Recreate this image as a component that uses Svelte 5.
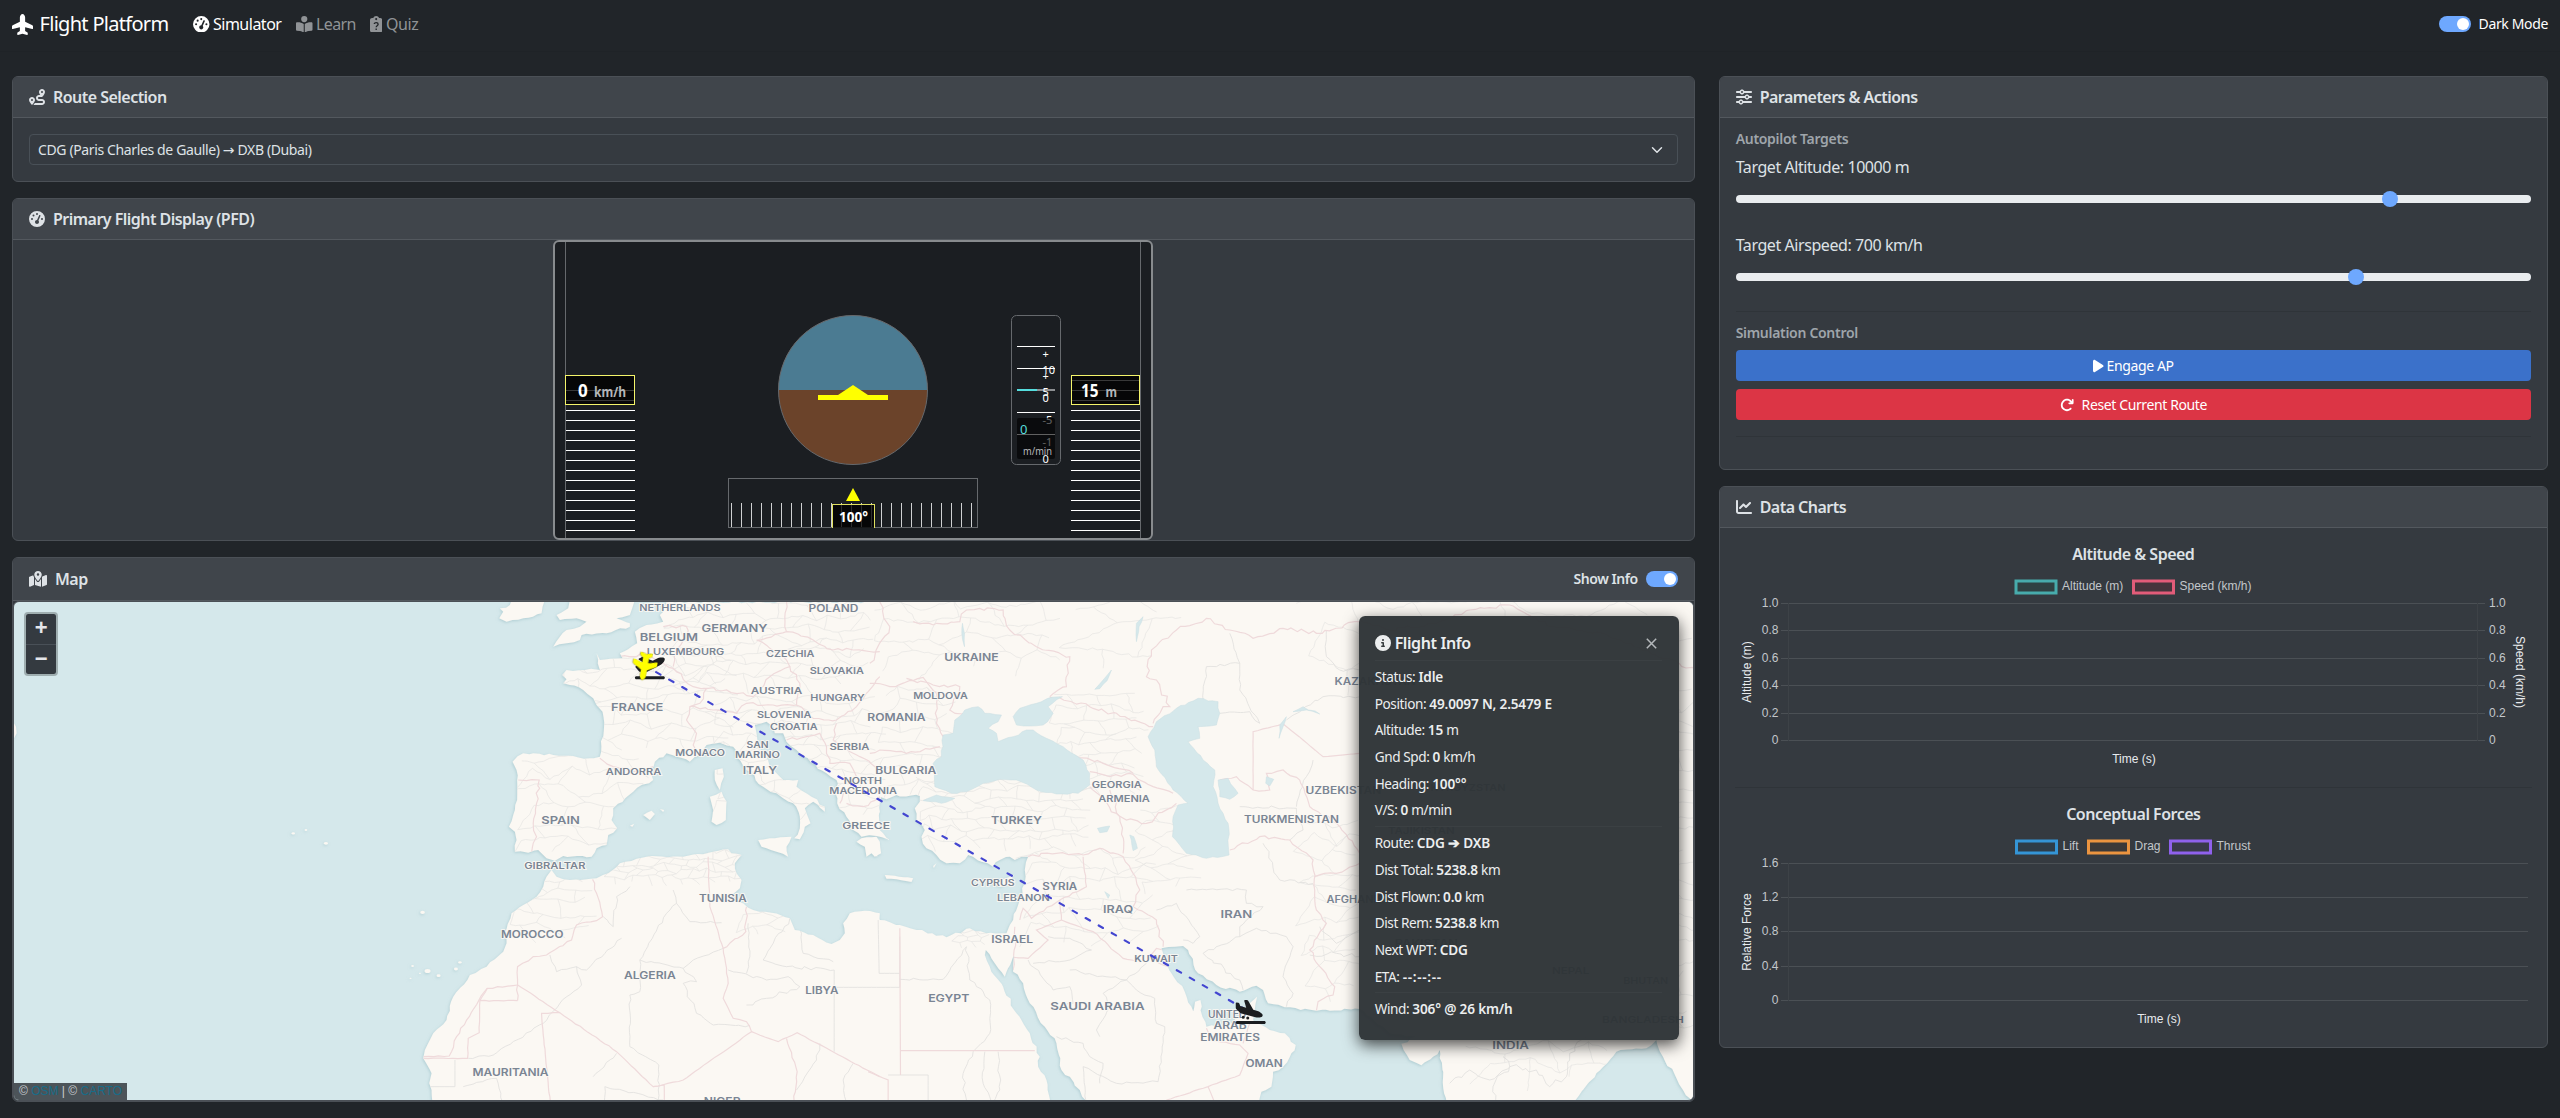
<script>
  const icons = {
    plane: [576, 'M482.3 192c34.2 0 93.7 29 93.7 64c0 36-59.5 64-93.7 64l-116.6 0L265.2 495.9c-5.7 10-16.3 16.1-27.8 16.1l-56.2 0c-10.6 0-18.3-10.2-15.4-20.4l49-171.6L112 320 68.8 377.6c-3 4-7.8 6.4-12.8 6.4l-42 0c-7.8 0-14-6.3-14-14c0-1.3 .2-2.6 .5-3.9L32 256 .5 145.9c-.4-1.3-.5-2.6-.5-3.9c0-7.8 6.3-14 14-14l42 0c5 0 9.8 2.4 12.8 6.4L112 192l102.9 0-49-171.6C162.9 10.2 170.6 0 181.2 0l56.2 0c11.5 0 22.1 6.2 27.8 16.1L365.7 192l116.6 0z'],
    gauge: [512, 'M0 256a256 256 0 1 1 512 0A256 256 0 1 1 0 256zM288 96a32 32 0 1 0 -64 0 32 32 0 1 0 64 0zM256 416c35.3 0 64-28.7 64-64c0-17.4-6.9-33.1-18.1-44.6L366 161.7c5.3-12.1-.2-26.3-12.3-31.6s-26.3 .2-31.6 12.3L257.9 288c-.6 0-1.3 0-1.9 0c-35.3 0-64 28.7-64 64s28.7 64 64 64zM176 144a32 32 0 1 0 -64 0 32 32 0 1 0 64 0zM96 288a32 32 0 1 0 0-64 32 32 0 1 0 0 64zm352-32a32 32 0 1 0 -64 0 32 32 0 1 0 64 0z'],
    reader: [512, 'M160 96a96 96 0 1 1 192 0A96 96 0 1 1 160 96zm80 152l0 264-48.4-24.2c-20.9-10.4-43.5-17-66.8-19.3l-96-9.6C12.5 457.2 0 443.5 0 427L0 224c0-17.7 14.3-32 32-32l30.3 0c63.6 0 125.6 19.6 177.7 56zm32 264l0-264c52.1-36.4 114.1-56 177.7-56l30.3 0c17.7 0 32 14.3 32 32l0 203c0 16.4-12.5 30.2-28.8 31.8l-96 9.6c-23.2 2.3-45.9 8.9-66.8 19.3L272 512z'],
    route: [512, 'M512 96c0 50.2-59.1 125.1-84.6 155c-3.8 4.4-9.4 6.1-14.5 5L320 256c-17.7 0-32 14.3-32 32s14.3 32 32 32l96 0c53 0 96 43 96 96s-43 96-96 96l-276.4 0c8.7-9.9 19.3-22.6 30-36.8c6.3-8.4 12.8-17.6 19-27.2L416 448c17.7 0 32-14.3 32-32s-14.3-32-32-32l-96 0c-53 0-96-43-96-96s43-96 96-96l39.8 0c-21-31.5-39.8-67.7-39.8-96c0-53 43-96 96-96s96 43 96 96zM117.1 489.1c-3.8 4.3-7.2 8.1-10.1 11.3l-1.8 2-.2-.2c-6 4.6-14.6 4-20-1.8C59.8 473 0 402.5 0 352c0-53 43-96 96-96s96 43 96 96c0 30-21.1 67-43.5 97.9c-10.7 14.7-21.7 28-30.8 38.5l-.6 .7zM128 352a32 32 0 1 0 -64 0 32 32 0 1 0 64 0zM416 128a32 32 0 1 0 0-64 32 32 0 1 0 0 64z'],
    map: [576, 'M408 120c0 54.6-73.1 151.9-105.2 192c-7.7 9.6-22 9.6-29.6 0C241.1 271.9 168 174.6 168 120C168 53.7 221.7 0 288 0s120 53.7 120 120zm8 80.4c3.5-6.9 6.7-13.8 9.6-20.6c.5-1.2 1-2.5 1.5-3.7l116-46.4C558.9 123.4 576 135 576 152l0 270.8c0 9.8-6 18.6-15.1 22.3L416 503l0-302.6zM137.6 138.3c2.4 14.1 7.2 28.3 12.8 41.5c2.9 6.8 6.1 13.7 9.6 20.6l0 251.4L32.9 502.7C17.1 509 0 497.4 0 480.4L0 209.6c0-9.8 6-18.6 15.1-22.3l122.6-49zM327.8 332c13.9-17.4 35.7-45.7 56.2-77l0 249.3L192 449.4 192 255c20.5 31.3 42.3 59.6 56.2 77c20.5 25.6 59.1 25.6 79.6 0zM288 152a40 40 0 1 0 0-80 40 40 0 1 0 0 80z'],
    sliders: [512, 'M0 416c0 17.7 14.3 32 32 32l54.7 0c12.3 28.3 40.5 48 73.3 48s61-19.7 73.3-48L480 448c17.7 0 32-14.3 32-32s-14.3-32-32-32l-246.7 0c-12.3-28.3-40.5-48-73.3-48s-61 19.7-73.3 48L32 384c-17.7 0-32 14.3-32 32zm128 0a32 32 0 1 1 64 0 32 32 0 1 1 -64 0zM320 256a32 32 0 1 1 64 0 32 32 0 1 1 -64 0zm32-80c-32.8 0-61 19.7-73.3 48L32 224c-17.7 0-32 14.3-32 32s14.3 32 32 32l246.7 0c12.3 28.3 40.5 48 73.3 48s61-19.7 73.3-48l54.7 0c17.7 0 32-14.3 32-32s-14.3-32-32-32l-54.7 0c-12.3-28.3-40.5-48-73.3-48zM192 128a32 32 0 1 1 0-64 32 32 0 1 1 0 64zm73.3-64C253 35.7 224.8 16 192 16s-61 19.7-73.3 48L32 64C14.3 64 0 78.3 0 96s14.3 32 32 32l86.7 0c12.3 28.3 40.5 48 73.3 48s61-19.7 73.3-48L480 128c17.7 0 32-14.3 32-32s-14.3-32-32-32L265.3 64z'],
    chart: [512, 'M64 64c0-17.7-14.3-32-32-32S0 46.3 0 64L0 400c0 44.2 35.8 80 80 80l400 0c17.7 0 32-14.3 32-32s-14.3-32-32-32L80 416c-8.8 0-16-7.2-16-16L64 64zm406.6 86.6c12.5-12.5 12.5-32.8 0-45.3s-32.8-12.5-45.3 0L320 210.7l-57.4-57.4c-12.5-12.5-32.8-12.5-45.3 0l-112 112c-12.5 12.5-12.5 32.8 0 45.3s32.8 12.5 45.3 0L240 221.3l57.4 57.4c12.5 12.5 32.8 12.5 45.3 0l128-128z'],
    play: [384, 'M73 39c-14.8-9.1-33.4-9.4-48.5-.9S0 62.6 0 80L0 432c0 17.4 9.4 33.4 24.5 41.9s33.7 8.1 48.5-.9L361 297c14.3-8.7 23-24.2 23-41s-8.7-32.2-23-41L73 39z'],
    redo: [512, 'M386.3 160L336 160c-17.7 0-32 14.3-32 32s14.3 32 32 32l128 0c17.7 0 32-14.3 32-32l0-128c0-17.7-14.3-32-32-32s-32 14.3-32 32l0 51.2L414.4 97.6c-87.5-87.5-229.3-87.5-316.8 0s-87.5 229.3 0 316.8s229.3 87.5 316.8 0c12.5-12.5 12.5-32.8 0-45.3s-32.8-12.5-45.3 0c-62.5 62.5-163.8 62.5-226.3 0s-62.5-163.8 0-226.3s163.8-62.5 226.3 0L386.3 160z'],
    info: [512, 'M256 512A256 256 0 1 0 256 0a256 256 0 1 0 0 512zM216 336l24 0 0-64-24 0c-13.3 0-24-10.7-24-24s10.7-24 24-24l48 0c13.3 0 24 10.7 24 24l0 88 8 0c13.3 0 24 10.7 24 24s-10.7 24-24 24l-80 0c-13.3 0-24-10.7-24-24s10.7-24 24-24zm40-208a32 32 0 1 1 0 64 32 32 0 1 1 0-64z'],
    clipboard: [384, 'M192 0c-41.8 0-77.4 26.7-90.5 64L64 64C28.7 64 0 92.7 0 128L0 448c0 35.3 28.7 64 64 64l256 0c35.3 0 64-28.7 64-64l0-320c0-35.3-28.7-64-64-64l-37.5 0C269.4 26.7 233.8 0 192 0zm0 64a32 32 0 1 1 0 64 32 32 0 1 1 0-64z']
  };
  const departure = 'M381 114.9L186.1 41.8c-16.7-6.2-35.2-5.3-51.1 2.7L89.1 67.4C78 73 77.2 88.5 87.6 95.2l146.9 94.5L136 240 77.8 214.1c-8.7-3.9-18.8-3.7-27.3 .6L18.3 230.8c-9.3 4.7-11.8 16.8-5 24.7l73.1 85.3c6.1 7.1 15 11.2 24.3 11.2l137.7 0c5 0 9.9-1.2 14.3-3.4L535.6 212.2c46.5-23.3 82.5-63.3 100.8-112C645.9 75 627.2 48 600.2 48l-57.4 0c-20.2 0-40.2 4.8-58.2 14L381 114.9zM0 480c0 17.7 14.3 32 32 32l576 0c17.7 0 32-14.3 32-32s-14.3-32-32-32L32 448c-17.7 0-32 14.3-32 32z';
  const arrival = 'M.3 166.9L0 68C0 57.7 9.5 50.1 19.5 52.3l35.6 7.9c10.6 2.3 19.2 9.9 23 20L96 128l127.3 37.6L181.8 20.4C178.9 10.2 186.6 0 197.2 0l40.1 0c11.6 0 22.2 6.2 27.9 16.3l109 193.8 107.2 31.7c15.9 4.7 30.8 12.5 43.7 22.8l34.4 27.6c24 19.2 18.1 57.3-10.7 68.2c-41.2 15.6-86.2 18.1-128.8 7L121.7 289.8c-11.1-2.9-21.2-8.7-29.3-16.9L9.5 189.4c-5.9-6-9.3-14.1-9.3-22.5zM32 448l576 0c17.7 0 32 14.3 32 32s-14.3 32-32 32L32 512c-17.7 0-32-14.3-32-32s14.3-32 32-32zm96-80a32 32 0 1 1 64 0 32 32 0 1 1 -64 0zm128-16a32 32 0 1 1 0 64 32 32 0 1 1 0-64z';

  const infoA = [
    ['Status', 'Idle', ''], ['Position', '49.0097 N, 2.5479 E', ''], ['Altitude', '15', 'm'],
    ['Gnd Spd', '0', 'km/h'], ['Heading', '100°°', ''], ['V/S', '0', 'm/min']
  ];
  const infoB = [
    ['Route', 'CDG ➔ DXB', ''], ['Dist Total', '5238.8', 'km'], ['Dist Flown', '0.0', 'km'],
    ['Dist Rem', '5238.8', 'km'], ['Next WPT', 'CDG', ''], ['ETA', '--:--:--', '']
  ];
  const range = (a, b, s) => Array.from({ length: Math.round((b - a) / s) + 1 }, (_, i) => a + i * s);

  // Deterministic noise keeps the drawn coastlines stable between renders.
  const noise = (x, y) => {
    const n = Math.sin(x * 12.9898 + y * 78.233) * 43758.5453;
    return (n - Math.floor(n)) * 2 - 1;
  };
  // Subdivides a polyline and offsets the new points for a natural outline.
  function rough(str, amp = 4, close = true, dx = 0) {
    const v = str.trim().split(/[\s,]+/).map(Number);
    const pts = [];
    for (let i = 0; i < v.length; i += 2) pts.push([v[i] + dx, v[i + 1]]);
    if (close) pts.push(pts[0]);
    let d = `M${pts[0]}`;
    for (let i = 1; i < pts.length; i++) {
      const [ax, ay] = pts[i - 1], [bx, by] = pts[i];
      const n = Math.max(1, Math.floor(Math.hypot(bx - ax, by - ay) / 14));
      for (let k = 1; k < n; k++) {
        const x = ax + ((bx - ax) * k) / n, y = ay + ((by - ay) * k) / n;
        d += `L${(x + amp * noise(x, y)).toFixed(1)} ${(y + amp * noise(y, x)).toFixed(1)}`;
      }
      d += `L${bx} ${by}`;
    }
    return d + (close ? 'Z' : '');
  }
  const E = 1410;
  const land = [
    rough('800 36 780 75 790 95 740 105 705 125 712 160 660 190 668 205 600 210 590 190 600 240 555 240 500 240 487 255 500 268 490 280 510 285 550 300 580 325 590 345 608 365 612 420 600 500 570 505 520 498 460 495 400 490 370 490 338 515 350 540 352 600 345 660 327 710 345 725 350 750 345 785 385 788 415 780 440 805 465 812 490 798 575 800 590 775 620 765 625 735 652 715 635 690 640 655 700 605 760 570 752 545 765 515 800 490 870 515 900 495 920 465 960 458 1000 470 1010 500 1040 540 1090 590 1130 610 1150 625 1180 640 1200 680 1200 715 1183 745 1200 748 1215 710 1232 700 1222 675 1215 655 1240 635 1275 665 1275 650 1235 620 1190 590 1195 570 1150 570 1110 530 1095 495 1070 470 1070 430 1065 405 1100 395 1120 410 1125 430 1150 430 1160 455 1200 490 1280 550 1310 570 1312 640 1340 680 1360 720 1385 740 1410 735 1440 735 1440 36'),
    rough('1370 755 1385 745 1430 740 1440 755 1444 790 1425 800 1415 790 1400 800 1395 770', 2),
    rough('455 840 470 860 510 870 590 865 625 850 660 820 740 800 850 800 940 785 985 778 995 790 1025 795 1005 820 1010 850 1025 870 1020 895 990 920 1000 930 1030 940 1060 960 1115 968 1170 985 1185 1020 1240 1035 1295 1062 1320 1050 1335 1030 1330 1000 1350 970 1395 962 1440 970 1440 1550 100 1550 95 1500 88 1480 95 1450 70 1405 75 1380 100 1330 140 1290 160 1220 210 1155 260 1130 310 1085 320 1060 315 1030 335 970 370 945 410 920 430 890 440 860', 2.5),
    rough('705 30 697 55 690 75 650 85 690 100 690 110 620 130 545 135 540 150 500 160 460 170 480 140 500 120 540 110 560 95 530 85 480 90 470 75 505 55 510 30', 3),
    rough('335 30 330 45 300 55 310 65 298 85 320 95 370 85 425 70 435 30', 4),
    rough('945 540 968 535 972 560 960 600 945 570', 2),
    rough('930 620 965 605 980 635 978 690 950 705 935 695 940 660', 2),
    rough('1075 750 1110 745 1175 740 1160 770 1165 800 1130 785 1085 770', 2),
    rough('730 675 755 662 765 672 750 690', 1),
    rough('780 657 793 660 790 666', 1),
    rough('690 707 703 701 698 710', 1),
    rough('-5 30 2480 30 2480 1550 2440 1500 2420 1464 2380 1400 2360 1350 2330 1375 2240 1385 2200 1431 2095 1550 1730 1550 1720 1464 1710 1380 1690 1400 1655 1426 1620 1410 1595 1361 1640 1340 1560 1330 1470 1257 1340 1262 1245 1252 1195 1240 1180 1200 1160 1187 1110 1205 1040 1185 985 1150 955 1080 940 1068 915 1070 875 1075 885 1110 905 1150 945 1205 965 1250 973 1285 976 1235 992 1230 998 1280 1010 1310 1075 1305 1120 1270 1140 1240 1162 1220 1155 1260 1150 1290 1200 1320 1245 1330 1278 1365 1265 1390 1240 1430 1210 1445 1205 1490 1175 1505 1165 1550 655 1550 630 1500 575 1440 560 1360 525 1310 480 1240 460 1180 430 1145 432 1095 405 1160 375 1120 348 1080 345 1095 360 1130 400 1190 440 1270 480 1330 510 1400 505 1430 530 1470 545 1550 -5 1550 -5 970 30 990 90 1005 140 1020 230 1042 300 1015 350 1030 410 1030 430 990 445 945 465 880 465 840 475 800 455 800 435 810 420 800 390 810 370 830 335 815 295 795 270 820 230 820 200 795 170 775 155 740 165 720 140 690 135 655 150 635 150 618 80 615 50 628 30 620 12 635 30 665 15 690 40 730 60 750 20 738 -5 735', 4, true, E),
    rough('365 880 400 868 432 855 420 875 395 890', 2, true, E),
    rough('45 855 130 865 125 876 50 866', 2, true, E),
    rough('0 760 25 770 22 800 8 790', 2, true, E),
    rough('190 828 200 820 192 834', 1, true, E),
    rough('-1158 445 -1150 430 -1152 410 -1158 400', 1)
  ];
  const water = [
    rough('255 390 285 360 325 350 345 370 395 375 385 395 355 415 380 430 385 455 430 440 470 420 490 420 530 445 580 470 640 510 660 550 660 585 625 610 560 612 500 600 440 570 390 568 340 580 290 605 245 610 195 590 190 520 215 500 220 435 250 430', 2.5, true, E),
    rough('430 380 450 355 500 340 545 322 578 320 535 350 550 370 520 405 480 408 440 405', 3, true, E),
    rough('835 440 860 395 920 355 985 325 1045 335 1050 370 1040 405 985 410 990 445 955 455 1000 510 1035 540 1030 590 1045 640 1060 670 1075 700 1078 795 1010 805 950 790 908 740 910 680 925 645 955 640 910 600 860 530 855 480', 3, true, E),
    rough('1045 570 1075 565 1105 610 1080 628 1050 620', 2, true, E),
    rough('160 632 200 615 255 625 215 640', 2, true, E),
    rough('675 298 700 270 725 240 712 272 690 296', 2, true, E),
    rough('780 735 792 740 803 775 790 782', 2, true, E),
    rough('683 715 720 708 712 725 690 728', 2, true, E),
    rough('1190 560 1212 568 1200 588 1188 580', 2, true, E),
    rough('1228 445 1230 405 1250 380 1240 410', 2, true, E),
    rough('1270 365 1300 350 1350 372 1310 360', 3, true, E),
    rough('705 905 720 915 715 925', 1, true, E),
    rough('800 155 800 100 820 80 808 110', 2, true, E),
    rough('278 100 284 130 284 170 276 130', 2, true, E)
  ];
  const canaries = [[38, 1128, 4], [83, 1143, 9], [116, 1157, 6], [168, 1137, 6], [180, 1117, 5], [32, 1165, 3], [60, 1150, 3], [68, 967, 7], [-320, 730, 5], [-282, 720, 4], [-222, 760, 6]];
  const countries = [
    rough('660 200 740 190 820 235 880 290 920 295 900 340 870 350 860 390 890 430 880 465 900 490', 6, false),
    rough('600 505 640 530 700 545 760 530', 5, false),
    rough('355 570 380 572 418 570 410 640 400 700 410 740 395 788', 5, false),
    rough('790 110 860 110 860 140 830 180 820 230', 5, false),
    rough('910 295 980 300 1060 320 1080 300 1110 260 1170 230 1150 200 1070 150 1160 125 1240 150 1300 180 1360 180 1440 185', 5, false),
    rough('1160 36 1155 80 1160 125', 4, false),
    rough('870 350 940 360 1010 370 1040 340 1120 345 1190 345 1200 280 1170 230', 5, false),
    rough('1190 345 1240 385 1310 390 1370 350 1440 260', 5, false),
    rough('1160 450 1260 430 1280 470 1290 520 1350 520 1370 560 1340 600 1320 640', 5, false),
    rough('1310 400 1300 450 1380 500 1440 540', 5, false),
    rough('1340 640 1390 650 1440 620', 5, false),
    rough('578 868 590 910 608 980 590 992 530 1005 515 1050 440 1095 400 1100 353 1130 353 1185 353 1232', 3, false),
    rough('353 1185 262 1195 240 1232 353 1232', 2, false),
    rough('353 1185 480 1268 650 1385 760 1490 850 1470 1055 1325 1040 1295 1000 1285 970 1225 985 1180 970 1075 930 950 925 800', 1.5, false),
    rough('240 1232 238 1328 205 1345 203 1405 70 1405', 1, false),
    rough('262 1195 200 1290 170 1340 148 1398 70 1400', 3, false),
    rough('480 1268 425 1270 432 1350 452 1550', 1, false),
    rough('1055 1325 1135 1355 1192 1328 1440 1460', 1, false),
    rough('1160 1345 1192 1445 1180 1550', 2, false),
    rough('970 1075 1038 1025 1040 950', 4, false),
    rough('760 1490 793 1485 793 1550', 1, false),
    rough('90 1015 92 1455', 0, false, E),
    rough('92 1382 408 1382 495 1382', 0, false, E),
    rough('-5 1445 55 1470 55 1550', 0, false, E),
    rough('0 280 60 290 160 262 200 310 200 400 220 440', 4, false, E),
    rough('110 265 190 285 270 290 240 360 280 372', 5, false, E),
    rough('0 490 30 480 110 490 210 470', 4, false, E),
    rough('130 95 200 100 270 95 290 60 330 55 400 60 420 120 500 170 600 200 590 290 540 320', 6, false, E),
    rough('30 36 60 110 0 220', 6, false, E),
    rough('660 545 720 560 780 550 850 590 910 610', 5, false, E),
    rough('580 490 700 520 790 550', 5, false, E),
    rough('660 590 740 670 770 690 830 700 920 640', 6, false, E),
    rough('475 800 560 790 640 795 690 775 760 800 790 850 810 900 790 950 860 990 880 1070', 5, false, E),
    rough('720 600 750 680 760 790', 6, false, E),
    rough('640 800 650 890 570 930 485 985 460 955 450 990', 2, false, E),
    rough('570 930 575 990 500 1020 535 1050 475 1105 432 1102', 1, false, E),
    rough('575 990 670 1025 760 1105 830 1115 860 1075 880 1080', 2, false, E),
    rough('860 1115 895 1130 910 1125', 2, false, E),
    rough('435 1010 438 1050 430 1140', 3, false, E),
    rough('850 400 880 350 900 350 860 270 830 260 845 180 920 120 1010 85 1080 120 1150 145 1240 115 1340 130 1470 95', 6, false, E),
    rough('540 320 660 350 850 410', 6, false, E),
    rough('1150 600 1150 425 1240 402 1300 450 1360 500 1470 490', 0.5, false, E),
    rough('1050 570 1100 560 1150 600 1200 600 1190 550 1240 540 1290 570 1320 650 1400 700 1470 790', 4, false, E),
    rough('1080 780 1170 740 1260 750 1330 810 1335 900 1340 960 1370 1000 1320 1080 1360 1140 1395 1190 1390 1215 1345 1235 1340 1262', 4, false, E),
    rough('1335 860 1400 850 1470 820', 5, false, E),
    rough('1010 1315 1025 1350 1110 1365 1135 1390 1110 1455 1015 1490 890 1530', 1, false, E),
    rough('1120 1360 1140 1300', 2, false, E),
    rough('1015 1490 1040 1550', 1, false, E),
    rough('1470 90 1560 120 1700 100 1800 60 1920 45 2050 110 2200 130 2480 240', 5, false, E)
  ];
  const provinces = [
    rough('775 1530 777 1425 690 1370 690 1215 720 1205 720 1110 800 970 830 940 820 900', 3, false),
    rough('720 1110 850 1135 890 1175 850 1180 890 1270 940 1305 1050 1306', 5, false),
    rough('665 1045 560 1140 530 1130 470 1145 450 1095', 4, false),
    rough('530 1130 545 1185 480 1240 430 1300 280 1395 205 1405', 3, false),
    rough('610 980 640 1010 650 920 690 890', 5, false),
    rough('830 940 870 995 965 998', 3, false),
    rough('970 1075 880 1110 850 1135', 2, false),
    rough('1040 1150 1050 1100 1045 1000', 4, false),
    rough('1040 1245 1100 1225 1200 1190 1165 1160 1100 1170 985 1140', 5, false),
    rough('1170 985 1120 1060 1090 1110 1160 1130 1303 1140', 5, false),
    rough('1303 1385 1303 1140', 0, false),
    rough('1303 1192 1500 1192 1500 1040', 0, false),
    rough('580 1460 650 1390', 5, false),
    rough('615 1550 615 1490 790 1530', 3, false),
    rough('165 1410 165 1490 90 1490', 0, false),
    rough('190 1490 290 1465 310 1550', 3, false),
    rough('1190 1500 1250 1410 1260 1360', 5, false),
    rough('1340 1550 1330 1470 1360 1420', 3, false),
    rough('1200 1015 1210 1090 1300 1115', 3, false),
    rough('90 1168 220 1168 290 1070', 3, false, E),
    rough('25 990 28 1150 90 1150', 0, false, E),
    rough('290 1070 300 1170 360 1230 360 1330 310 1385 280 1450 290 1550', 5, false, E),
    rough('345 1385 340 1480 370 1550', 4, false, E),
    rough('385 1385 390 1500 360 1550', 4, false, E),
    rough('55 1455 175 1455 175 1550', 0, false, E),
    rough('490 1120 600 1110 665 1080 600 1045 535 1040', 4, false, E),
    rough('475 1110 550 1200 600 1190 610 1240 560 1250', 5, false, E),
    rough('600 1140 770 1170 830 1120', 5, false, E),
    rough('770 1170 800 1200 855 1225 860 1300 885 1310 865 1475 740 1480 640 1430 650 1550', 3, false, E),
    rough('560 1340 640 1360 660 1400 700 1420 690 1480', 5, false, E),
    rough('770 1170 700 1210 720 1250 680 1320 690 1340', 4, false, E),
    rough('950 900 1130 900 1130 940 1180 950 1110 1010 1110 1040', 4, false, E),
    rough('860 960 920 940 990 1040 970 1060 940 1050', 4, false, E),
    rough('1110 1040 1160 1015 1250 1040 1270 1070 1240 1160 1270 1210 1250 1250', 4, false, E),
    rough('1110 1040 1000 1090 1110 1170 1120 1200', 6, false, E),
    rough('1050 370 1140 365 1170 400 1110 300 1110 220 1010 230 1000 330', 4, false, E),
    rough('1110 220 1080 130', 3, false, E),
    rough('1370 120 1370 200 1410 240 1470 240', 4, false, E),
    rough('1470 320 1360 320 1250 390', 5, false, E),
    rough('1280 650 1310 560 1330 510', 5, false, E),
    rough('1110 650 1280 655 1300 720 1260 750', 5, false, E),
    rough('1180 760 1230 870 1330 880', 6, false, E),
    rough('1350 1010 1400 1060 1470 1020', 6, false, E),
    rough('1320 1095 1400 1090 1470 1100', 6, false, E),
    rough('1740 1480 1800 1440 1860 1470 1920 1430 2000 1440 2040 1490 2090 1460', 9, false, E),
    rough('1880 1550 1870 1490 1920 1430 1900 1400', 8, false, E),
    rough('2150 1340 2100 1390 2090 1460', 8, false, E)
  ];
  // Jittered brick mesh that stands for small administrative areas.
  function mesh(x0, y0, x1, y1, s) {
    const p = (i, j) => {
      const x = x0 + i * s + (j % 2 ? s / 2 : 0), y = y0 + j * s * 0.8;
      return [x + noise(x, y) * s * 0.38, y + noise(y + 3, x) * s * 0.36];
    };
    const seg = ([ax, ay], [bx, by]) => rough(`${ax} ${ay} ${bx} ${by}`, 3.5, false);
    let d = '';
    const nx = Math.floor((x1 - x0) / s), ny = Math.floor((y1 - y0) / (s * 0.8));
    for (let j = 0; j < ny; j++)
      for (let i = 0; i < nx; i++) {
        d += seg(p(i, j), p(i + 1, j));
        if ((i + j) % 2) d += seg(p(i, j), p(i, j + 1));
      }
    return d;
  }
  const meshes = [
    mesh(480, 200, 1000, 490, 50), mesh(800, 40, 1440, 330, 46), mesh(940, 330, 1440, 700, 44),
    mesh(350, 500, 740, 800, 62), mesh(620, 785, 1030, 900, 24), mesh(330, 860, 600, 1080, 46),
    mesh(1440, 40, 2000, 300, 66), mesh(1440, 300, 1650, 620, 50), mesh(1550, 570, 2060, 800, 36),
    mesh(1960, 320, 2240, 640, 42), mesh(2000, 40, 2320, 300, 90), mesh(1860, 790, 2300, 1060, 56),
    mesh(1660, 1025, 1760, 1080, 20), mesh(2220, 660, 2380, 900, 50), mesh(2700, 700, 2880, 1230, 60),
    mesh(2700, 40, 3879, 400, 120), mesh(3750, 300, 3879, 1400, 60), mesh(3220, 1370, 3700, 1530, 70), mesh(1000, 930, 1180, 1060, 50)
  ];
  const labels = [
    ['NETHERLANDS', 840, 54, 244, 27], ['POLAND', 1301, 56, 150, 29], ['GERMANY', 1004, 115, 198, 31], ['BELGIUM', 807, 142, 175, 31],
    ['LUXEMBOURG', 857, 186, 232, 27], ['CZECHIA', 1171, 190, 145, 27], ['SLOVAKIA', 1311, 242, 163, 27], ['AUSTRIA', 1130, 301, 155, 28],
    ['HUNGARY', 1313, 322, 163, 28], ['FRANCE', 712, 351, 157, 32], ['SLOVENIA', 1153, 374, 163, 27], ['CROATIA', 1182, 411, 143, 27],
    ['SAN', 1073, 464, 66, 27], ['MARINO', 1073, 494, 135, 27], ['MONACO', 901, 489, 149, 27], ['SERBIA', 1349, 470, 120, 28],
    ['ITALY', 1080, 539, 103, 32], ['ANDORRA', 701, 545, 166, 27], ['NORTH', 1389, 572, 115, 27], ['MACEDONIA', 1390, 603, 203, 27],
    ['SPAIN', 482, 691, 116, 32], ['GREECE', 1399, 706, 143, 28], ['GIBRALTAR', 465, 828, 184, 28], ['TUNISIA', 969, 924, 143, 30],
    ['MOROCCO', 397, 1032, 187, 31], ['ALGERIA', 750, 1157, 155, 31], ['LIBYA', 1266, 1200, 100, 31], ['MAURITANIA', 332, 1446, 228, 31],
    ['NIGER', 967, 1535, 110, 31], ['ROMANIA', 1490, 381, 175, 30], ['UKRAINE', E + 305, 202, 163, 31], ['MOLDOVA', E + 212, 317, 164, 27],
    ['BULGARIA', E + 108, 542, 183, 29], ['TURKEY', E + 440, 691, 153, 32], ['GEORGIA', E + 741, 585, 150, 27], ['ARMENIA', E + 763, 625, 155, 27],
    ['KAZAKHSTAN', E + 1516, 275, 243, 31], ['UZBEKISTAN', E + 1421, 602, 227, 29], ['TURKMENISTAN', E + 1265, 689, 285, 29],
    ['CYPRUS', E + 369, 877, 131, 27], ['SYRIA', E + 570, 891, 105, 29], ['LEBANON', E + 461, 923, 158, 27], ['IRAQ', E + 745, 957, 90, 31],
    ['IRAN', E + 1100, 971, 95, 32], ['AFGHANISTAN', E + 1490, 928, 240, 29], ['ISRAEL', E + 427, 1047, 125, 30], ['KUWAIT', E + 859, 1106, 131, 27],
    ['EGYPT', E + 237, 1225, 124, 32], ['SAUDI ARABIA', E + 683, 1248, 283, 32], ['UNITED', E + 1072, 1274, 115, 29], ['ARAB', E + 1081, 1308, 100, 29],
    ['EMIRATES', E + 1081, 1342, 179, 29], ['OMAN', E + 1183, 1420, 112, 30], ['INDIA', E + 1923, 1367, 110, 29], ['KYRGYZSTAN', E + 1795, 594, 225, 28],
    ['TAJIKISTAN', E + 1655, 721, 200, 28], ['NEPAL', E + 2103, 1141, 112, 28], ['BHUTAN', E + 2328, 1173, 135, 26], ['BANGLADESH', E + 2320, 1290, 246, 26],
    ['PAKISTAN', E + 1670, 1060, 190, 30]
  ];
</script>

{#snippet icon(name)}
  <svg class="ico" viewBox="0 0 {icons[name][0]} 512"><path d={icons[name][1]} fill="currentColor" fill-rule={name === 'info' || name === 'clipboard' ? 'evenodd' : 'nonzero'} />
    {#if name === 'clipboard'}<path d="M132 250c0-62 120-62 120 5c0 48-60 45-60 92M192 388v44" fill="none" stroke="#212529" stroke-width="42" />{/if}
  </svg>
{/snippet}
{#snippet head(name, title)}
  <header class="card-head">{@render icon(name)}<span>{title}</span></header>
{/snippet}

<nav>
  <div class="brand"><svg class="logo" viewBox="32 0 512 576" preserveAspectRatio="none"><path transform="translate(32 576) rotate(-90)" d={icons.plane[1]} fill="currentColor" /></svg><span>Flight Platform</span></div>
  <a class="active" href="#sim">{@render icon('gauge')}<span class="t-sim">Simulator</span></a>
  <a href="#learn">{@render icon('reader')}<span class="t-learn">Learn</span></a>
  <a href="#quiz">{@render icon('clipboard')}<span class="t-quiz">Quiz</span></a>
  <label class="mode"><i class="switch"></i><span>Dark Mode</span></label>
</nav>

<main>
  <div class="left">
    <section class="card">
      {@render head('route', 'Route Selection')}
      <div class="route-body">
        <div class="select"><span>CDG (Paris Charles de Gaulle) <em>→</em> DXB (Dubai)</span>
          <svg viewBox="0 0 16 16"><path d="m2 5 6 6 6-6" fill="none" stroke="#dee2e6" stroke-width="2" stroke-linecap="round" stroke-linejoin="round" /></svg>
        </div>
      </div>
    </section>

    <section class="card">
      {@render head('gauge', 'Primary Flight Display (PFD)')}
      <svg class="pfd" viewBox="553 240 600 300">
        <rect x="554" y="241" width="598" height="298" rx="5" fill="#1b1e22" stroke="#888b8e" stroke-width="2" />
        <g shape-rendering="crispEdges">
          <path d="M565.5 242v296M1140.5 242v296" stroke="#66696d" />
          {#each range(390, 530, 10) as y}
            <path d="M566 {y + 0.5}h69M1071 {y + 0.5}h69" stroke="#fff" />
          {/each}
          <path d="M1071 380.5h69" stroke="#fff" />
          <rect x="565.5" y="375.5" width="69" height="29" fill="#000" fill-opacity=".78" stroke="#f4f46a" />
          <rect x="1071.5" y="375.5" width="68" height="29" fill="#000" fill-opacity=".78" stroke="#f4f46a" />
        </g>
        <text class="num" x="578" y="397" textLength="9.5">0</text><text class="unit" x="594" y="397" textLength="32" lengthAdjust="spacingAndGlyphs">km/h</text>
        <text class="num" x="1081" y="397" textLength="17.5" lengthAdjust="spacingAndGlyphs">15</text><text class="unit" x="1105.5" y="397" textLength="11.5" lengthAdjust="spacingAndGlyphs">m</text>

        <circle cx="853" cy="390" r="74.5" fill="#6b432a" />
        <path d="M778.5 390a74.5 74.5 0 0 1 149 0z" fill="#4b7b92" />
        <circle cx="853" cy="390" r="74.5" fill="none" stroke="#66696d" />
        <path d="M818 395h20l15-10 15 10h20v5h-70z" fill="#ff0" />

        <rect x="1011.5" y="315.5" width="49" height="149" rx="5" fill="none" stroke="#66696d" />
        <path d="M1017 346.5h38M1017 368.5h38M1017 412.5h38M1017 434.5h38" stroke="#fff" shape-rendering="crispEdges" />
        <path d="M1037 390h18" stroke="#8d9093" stroke-width="2" /><path d="M1017 390h20" stroke="#5dd" stroke-width="2" />
        <g class="vsi"><text x="1042.5" y="358">+</text><text x="1042.5" y="374">10</text><text x="1042.5" y="380">+</text><text x="1042.5" y="396">5</text><text x="1042.5" y="402">0</text><text x="1042.5" y="424">-5</text><text x="1042.5" y="446">-1</text></g>
        <rect x="1017" y="418" width="38" height="41" rx="2" fill="#000" fill-opacity=".62" />
        <text class="vs0" x="1020" y="434">0</text><text class="vsu" x="1023" y="455" textLength="29" lengthAdjust="spacingAndGlyphs">m/min</text>
        <text class="vsi" x="1042.5" y="463">0</text>

        <g shape-rendering="crispEdges">
          <rect x="728.5" y="478.5" width="249" height="49" fill="none" stroke="#66696d" />
          {#each range(731.5, 971.5, 10) as x}<path d="M{x} 503v24" stroke="#cfd1d3" />{/each}
          <path d="M832 528V504.500h42V528" fill="#000" fill-opacity=".78" stroke="#e0e060" />
        </g>
        <path d="M846 501l7-13 7 13z" fill="#ff0" />
        <text class="hdg" x="839" y="522" textLength="29" lengthAdjust="spacingAndGlyphs">100°</text>
      </svg>
    </section>

    <section class="card">
      <header class="card-head tall">{@render icon('map')}<span>Map</span><label class="show"><span>Show Info</span><i class="switch"></i></label></header>
      <div class="map">
        <svg class="world" viewBox="-1158 36 5037 1494" preserveAspectRatio="none">
          <defs>
            <clipPath id="landclip">{#each land as d}<path {d} />{/each}</clipPath>
            <filter id="coast" x="-1%" y="-1%" width="102%" height="102%"><feDropShadow dx="-2" dy="3" stdDeviation="5" flood-color="#9cc0c6" flood-opacity=".65" /></filter>
          </defs>
          <g filter="url(#coast)" fill="#fbf8f3">
            {#each land as d}<path {d} />{/each}
            {#each canaries as [x, y, r]}<ellipse cx={x} cy={y} rx={r} ry={r * 0.7} />{/each}
          </g>
          <g clip-path="url(#landclip)" fill="none">
            <g stroke="#e9e7e4" stroke-width="2.4">{#each meshes as d}<path {d} />{/each}</g>
            <g stroke="#e2e1df" stroke-width="2.6">{#each provinces as d}<path {d} />{/each}</g>
            <g stroke="#efdadb" stroke-width="3.6">{#each countries as d}<path {d} />{/each}</g>
          </g>
          <g fill="#d5e8eb" stroke="#cbdfe2" stroke-width="1.500">{#each water as d}<path {d} />{/each}</g>
          <g class="labels">{#each labels as [t, x, y, w, s]}<text {x} y={y + s * 0.36} font-size={s} textLength={w} lengthAdjust="spacingAndGlyphs">{t}</text>{/each}</g>
          <path d="M735 227L2530 1254.500" stroke="#4346d0" stroke-width="6.500" stroke-dasharray="15 30" stroke-dashoffset="6" stroke-linecap="round" />
          <path d={departure} transform="translate(705 196) scale(.1406)" fill="#1b1d20" />
          <path d={arrival} transform="translate(2508 1230) scale(.1406)" fill="#1b1d20" />
          <path class="craft" d={icons.plane[1]} transform="translate(734 229) rotate(100) scale(.144) translate(-288 -256)" fill="#ff0" />
        </svg>
        <div class="zoom"><b>+</b><b>−</b></div>
        <div class="attr">© <a href="#osm">OSM</a> | © <a href="#carto">CARTO</a></div>
        <aside>
          <h5>{@render icon('info')}<span>Flight Info</span><svg class="x" viewBox="0 0 11 11"><path d="M.8.8l9.400 9.400M10.200.8L.8 10.200" stroke="#b4b8bb" stroke-width="1.500" /></svg></h5>
          <div class="rows">{#each infoA as [k, v, u]}<p>{k}: <b>{v}</b> {u}</p>{/each}</div>
          <div class="rows">{#each infoB as [k, v, u]}<p>{k}: <b class:eta={k === 'ETA'}>{v}</b> {u}</p>{/each}</div>
          <div class="rows"><p>Wind: <b>306° @ 26 km/h</b></p></div>
        </aside>
      </div>
    </section>
  </div>

  <div class="right">
    <section class="card">
      {@render head('sliders', 'Parameters & Actions')}
      <div class="params">
        <h6>Autopilot Targets</h6>
        <p>Target Altitude: 10000 m</p>
        <div class="range"><i style="left: 82.3%"></i></div>
        <p class="second">Target Airspeed: 700 km/h</p>
        <div class="range"><i style="left: 78.0%"></i></div>
        <hr class="h1" />
        <h6>Simulation Control</h6>
        <button class="go">{@render icon('play')}<span>Engage AP</span></button>
        <button class="stop">{@render icon('redo')}<span>Reset Current Route</span></button>
        <hr class="h2" />
      </div>
    </section>

    <section class="card">
      {@render head('chart', 'Data Charts')}
      <div class="charts">
        <h4>Altitude &amp; Speed</h4>
        <svg class="chart" viewBox="1735 571 798 200">
          <g shape-rendering="crispEdges" stroke="#4b5055">
            {#each [603, 630, 658, 685, 713, 740] as y}<path d="M1781 {y + 0.5}h704" />{/each}
            <path d="M1788.500 603v138M2477.500 603v138" stroke="#3d4247" />
          </g>
          <rect x="2016" y="581" width="40" height="12" fill="#2f4143" stroke="#4bc0c0" stroke-opacity=".85" stroke-width="3" />
          <rect x="2133.500" y="581" width="40" height="12" fill="#45343c" stroke="#ff6384" stroke-opacity=".85" stroke-width="3" />
          <g class="tick"><text x="2062" y="590">Altitude (m)</text><text x="2179.500" y="590">Speed (km/h)</text>
            {#each [['1.0', 603], ['0.8', 630], ['0.6', 658], ['0.4', 685], ['0.2', 713], ['0', 740]] as [t, y]}
              <text x="1778.500" y={y + 3.5} text-anchor="end">{t}</text><text x="2489" y={y + 3.5}>{t}</text>
            {/each}
          </g>
          <g class="axis"><text x="2134" y="763">Time (s)</text><text transform="translate(1751 672) rotate(-90)">Altitude (m)</text><text transform="translate(2516 672) rotate(90)">Speed (km/h)</text></g>
        </svg>
        <hr />
        <h4>Conceptual Forces</h4>
        <svg class="chart" viewBox="1735 831 798 200">
          <g shape-rendering="crispEdges" stroke="#4b5055">
            {#each [863, 897, 931, 966, 1000] as y}<path d="M1781 {y + 0.5}h747" />{/each}
            <path d="M1788.500 863v138" stroke="#3d4247" />
          </g>
          <rect x="2016.500" y="841" width="40" height="12" fill="#2e3d49" stroke="#36a2eb" stroke-opacity=".88" stroke-width="3" />
          <rect x="2088.500" y="841" width="40" height="12" fill="#3c3938" stroke="#ff9f40" stroke-opacity=".9" stroke-width="3" />
          <rect x="2170.500" y="841" width="40" height="12" fill="#393a49" stroke="#9966ff" stroke-opacity=".9" stroke-width="3" />
          <g class="tick"><text x="2062.500" y="850">Lift</text><text x="2134.500" y="850">Drag</text><text x="2216.500" y="850">Thrust</text>
            {#each [['1.6', 863], ['1.2', 897], ['0.8', 931], ['0.4', 966], ['0', 1000]] as [t, y]}<text x="1778.500" y={y + 3.5} text-anchor="end">{t}</text>{/each}
          </g>
          <g class="axis"><text x="2159" y="1023">Time (s)</text><text transform="translate(1751 932) rotate(-90)">Relative Force</text></g>
        </svg>
      </div>
    </section>
  </div>
</main>

<style>
  :global(body) { background: #212529; color: #dee2e6; font: 16px/24px "Noto Sans", "Open Sans", sans-serif; letter-spacing: -.4px; min-height: 1118px; overflow: hidden; }
  * { box-sizing: border-box; }
  h4, h5, h6, p { margin: 0; }
  a { color: inherit; text-decoration: none; }
  .ico { height: 16px; width: auto; flex: none; display: block; }
  nav { height: 52px; padding: 0 12px 3px; display: flex; align-items: center; border-bottom: 1px solid #1f2327; }
  nav a { display: flex; align-items: center; gap: 3.500px; color: #909396; margin-right: 15.500px; }
  nav a.active { color: #fff; }
  .brand { display: flex; align-items: center; gap: 6.500px; font-size: 20px; color: #fff; margin-right: 24px; letter-spacing: -.7px; white-space: nowrap; }
  .brand span { width: 129.500px; }
  .logo { width: 21px; height: 21px; }
  .t-sim { width: 67.500px; letter-spacing: -.5px; } .t-learn { width: 38.500px; letter-spacing: -.6px; } .t-quiz { width: 33px; }
  nav a .ico { height: 16.500px; }
  .mode { margin-left: auto; display: flex; align-items: center; gap: 8px; font-size: 14px; color: #fff; letter-spacing: -.36px; }
  .mode .switch { margin-top: -1px; }
  .switch { width: 32px; height: 16px; border-radius: 8px; background: #6ea8fe; display: flex; justify-content: flex-end; align-items: center; padding-right: 2px; }
  .switch::after { content: ""; width: 12px; height: 12px; border-radius: 50%; background: #fff; }
  main { display: grid; grid-template-columns: 1682.670px 829.330px; gap: 24px; padding: 24px 12px 0; }
  .left, .right { display: flex; flex-direction: column; gap: 16px; }
  .card { background: #353a40; border: 1px solid #4b5056; border-radius: 6px; overflow: hidden; }
  .card-head { height: 41px; background: #40454b; border-bottom: 1px solid #53585e; padding: 0 16px; display: flex; align-items: center; gap: 8px; font-weight: 600; letter-spacing: -.53px; }
  .tall { height: 43px; }
  .route-body { padding: 16px; }
  .select { height: 31px; border: 1px solid #495057; border-radius: 4px; padding: 0 12px 0 8px; display: flex; align-items: center; justify-content: space-between; font-size: 14px; letter-spacing: -.37px; }
  .select svg { width: 12px; height: 12px; margin-right: 2px; }
  .select em { font: 14px "DejaVu Sans", sans-serif; }
  .pfd { display: block; width: 600px; height: 300px; margin: 0 auto; letter-spacing: 0; }
  .num { font-size: 17px; font-weight: 700; fill: #fff; }
  .unit { font-size: 14px; font-weight: 700; fill: #b3b6b9; }
  .vsi { font-size: 11px; fill: #fff; }
  .vs0 { font-size: 13px; fill: #5dd; }
  .vsu { font-size: 10.500px; fill: #b9bbbd; }
  .hdg { font-size: 15px; font-weight: 700; fill: #fff; }
  .show { margin-left: auto; display: flex; align-items: center; gap: 8px; font-size: 14px; letter-spacing: -.45px; }
  .map { height: 500px; border: 1px solid #4b5056; border-radius: 6px; background: #d5e8eb; position: relative; overflow: hidden; }
  .world { display: block; width: 100%; height: 498px; }
  .labels { font-family: "Inter", sans-serif; font-weight: 600; fill: #7a8593; stroke: #fbf8f3; stroke-width: 5; paint-order: stroke; text-anchor: middle; letter-spacing: 0; }
  .craft { filter: drop-shadow(3px 5px 4px rgba(0, 0, 0, .6)); }
  .zoom { position: absolute; left: 10px; top: 10px; width: 34px; border: 2px solid rgba(0, 0, 0, .25); border-radius: 4px; background-clip: padding-box; overflow: hidden; }
  .zoom b { display: block; height: 30px; background: #343a40; text-align: center; font: 700 22px/28px "Liberation Sans", sans-serif; color: #e4e6ea; }
  .zoom b + b { border-top: 1px solid #495057; line-height: 27px; }
  .attr { position: absolute; left: 0; bottom: 0; width: 113px; height: 17px; padding-left: 5px; background: rgba(52, 58, 64, .85); color: #c9cdd0; font: 12px/16px "Liberation Sans", sans-serif; letter-spacing: 0; white-space: nowrap; }
  .attr a { color: #186c88; }
  aside { position: absolute; right: 14px; top: 14px; width: 320px; height: 424px; border-radius: 6px; background: rgba(46, 51, 54, .965); padding: 15px 16px 16px; color: #eceeef; font-size: 13.600px; box-shadow: 0 5px 16px rgba(0, 0, 0, .7); letter-spacing: -.4px; }
  aside h5 { display: flex; align-items: center; gap: 4px; height: 29px; padding-bottom: 5px; font-size: 16px; font-weight: 600; width: 287px; }
  .x { width: 11px; height: 11px; margin-left: auto; margin-right: 5px; }
  .rows { width: 287px; border-top: 1px solid #3b4043; padding: 3px 0 2px; }
  .rows p { height: 26.700px; line-height: 25px; white-space: pre; }
  .rows b { font-weight: 600; letter-spacing: -.17px; }
  .rows .eta { letter-spacing: .7px; }
  .params { padding: 12px 16px 32px; }
  h6 { font-size: 14px; line-height: 18px; font-weight: 600; color: #9fa5ab; margin-bottom: 8px; letter-spacing: -.3px; }
  .params p { margin-bottom: 7px; line-height: 23px; padding-bottom: 1px; letter-spacing: -.43px; }
  .params .second { margin-top: 23px; }
  .range { height: 24px; display: flex; align-items: center; position: relative; }
  .range::before { content: ""; flex: 1; height: 8px; border-radius: 4px; background: #e9ecef; }
  .range i { position: absolute; top: 4px; width: 16px; height: 16px; transform: translateX(-50%); border-radius: 50%; background: #6ea8fe; }
  hr { border: 0; height: 1px; background: #2f3439; margin: 0; }
  .h1 { margin: 22px 0 12px; }
  .h2 { margin-top: 16px; }
  button { display: flex; width: 100%; height: 31px; border: 0; border-radius: 4px; color: #fff; font: 14px "Noto Sans", sans-serif; align-items: center; justify-content: center; gap: 3px; letter-spacing: -.38px; padding: 0; }
  button .ico { height: 14px; }
  .go { background: #3b71ca; margin-bottom: 8px; }
  .stop { background: #dc3545; gap: 8px; }
  .charts { padding: 16px 15px; }
  h4 { font-size: 16px; line-height: 17px; padding-top: 2px; font-weight: 600; text-align: center; margin-bottom: 8px; letter-spacing: -.5px; }
  .chart { display: block; width: 798px; height: 200px; letter-spacing: 0; font-family: "Liberation Sans", sans-serif; font-size: 12px; }
  .charts hr { margin: 16px 0; }
  .tick { fill: #c3c7cb; }
  .axis { fill: #e8ebee; text-anchor: middle; }
</style>
